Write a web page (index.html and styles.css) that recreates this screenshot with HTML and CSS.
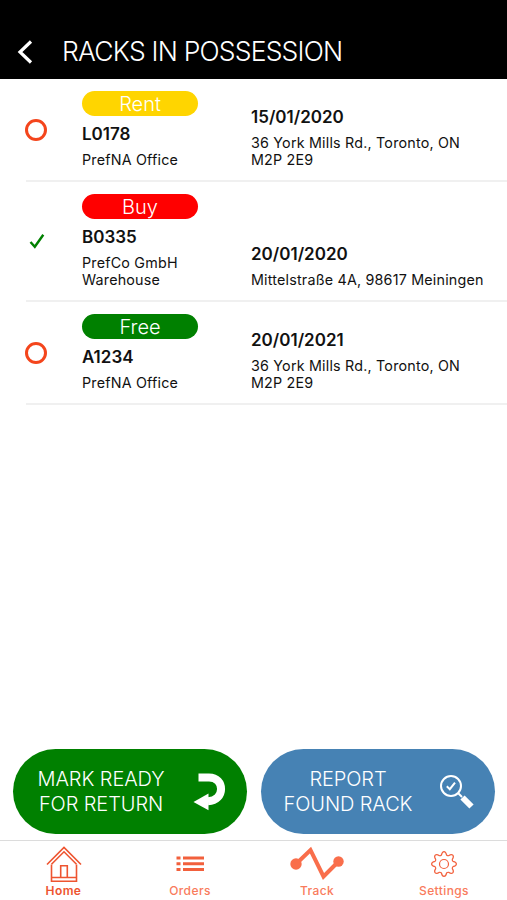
FILE: index.html
```html
<!DOCTYPE html>
<html lang="en">
<head>
    <meta charset="UTF-8">
    <meta name="viewport" content="width=device-width, initial-scale=1.0">
    <title>Racks in Possession</title>
    <link rel="stylesheet" href="styles.css">
</head>
<body>

<header class="header">
    <svg class="back" viewBox="0 0 16 24" width="16" height="24"><path d="M14 1.5L3 12L14 22.5"/></svg>
    <h1>RACKS IN POSSESSION</h1>
</header>

<main class="rack-list">
    <div class="rack">
        <div class="select"><span class="circle"></span></div>
        <div class="info">
            <div class="badge rent">Rent</div>
            <h2>L0178</h2>
            <p>PrefNA Office</p>
        </div>
        <div class="place">
            <h2>15/01/2020</h2>
            <p>36 York Mills Rd., Toronto, ON<br>M2P 2E9</p>
        </div>
    </div>
    <div class="rack">
        <div class="select">
            <svg class="check" viewBox="0 0 16 16" width="16" height="16"><path d="M1.5 9L5.8 13.8L14.3 1.7"/></svg>
        </div>
        <div class="info">
            <div class="badge buy">Buy</div>
            <h2>B0335</h2>
            <p>PrefCo GmbH<br>Warehouse</p>
        </div>
        <div class="place">
            <h2>20/01/2020</h2>
            <p>Mittelstraße 4A, 98617 Meiningen</p>
        </div>
    </div>
    <div class="rack">
        <div class="select"><span class="circle"></span></div>
        <div class="info">
            <div class="badge free">Free</div>
            <h2>A1234</h2>
            <p>PrefNA Office</p>
        </div>
        <div class="place">
            <h2>20/01/2021</h2>
            <p>36 York Mills Rd., Toronto, ON<br>M2P 2E9</p>
        </div>
    </div>
</main>

<div class="actions">
    <button class="action return">
        <span class="label">MARK READY<br>FOR RETURN</span>
        <svg class="return-icon" viewBox="0 0 34 38" width="34" height="38">
            <path class="bend" d="M5.5 4.5H16C32 4.5 32.5 27.5 15 28.2"/>
            <path class="head" d="M0.5 29L15.5 20.5V37.3Z"/>
        </svg>
    </button>
    <button class="action report">
        <span class="label">REPORT<br>FOUND RACK</span>
        <svg class="search-icon" viewBox="0 0 34 34" width="34" height="34">
            <circle cx="11" cy="11" r="10"/>
            <path d="M6.8 11.3L9.8 14.2L15 7.6"/>
            <path d="M18 18L22 22"/>
            <path class="grip" d="M22.5 22.5L31.5 31.5"/>
        </svg>
    </button>
</div>

<nav class="tabs">
    <a class="tab home">
        <svg viewBox="0 0 36 36" width="36" height="36">
            <path d="M1 18.5L18 1.5L35 18.5"/>
            <path d="M5.5 18.5V35.2H30.5V18.5M5.5 31.5H30.5"/>
            <path d="M5.5 18.3L18 5.8L30.5 18.3"/>
            <path d="M14.7 31.5V19.8H21.3V31.5"/>
        </svg>
        <span>Home</span>
    </a>
    <a class="tab orders">
        <svg viewBox="0 0 28 36" width="28" height="36">
            <path d="M0.5 12H4.5M7 12H28M0.5 17.8H4.5M7 17.8H28M0.5 23.6H4.5M7 23.6H28"/>
        </svg>
        <span>Orders</span>
    </a>
    <a class="tab track">
        <svg viewBox="0 0 54 36" width="54" height="36">
            <path d="M6 18L20.5 4L33.5 30.5L48.5 15.5"/>
            <circle cx="6" cy="18" r="5.7"/>
            <circle cx="48.5" cy="15.5" r="5.2"/>
        </svg>
        <span>Track</span>
    </a>
    <a class="tab settings">
        <svg viewBox="0 0 26 36" width="26" height="36">
            <path d="M10.4 9Q11.2 5.6 13 5.6T15.6 9Q16.4 9.9 17.6 9.7Q20.4 7.8 21.8 9.2T21.3 13.4Q21.1 14.6 22 15.4Q25.4 16.2 25.4 18T22 20.6Q21.1 21.4 21.3 22.6Q23.2 25.4 21.8 26.8T17.6 26.3Q16.4 26.1 15.6 27Q14.8 30.4 13 30.4T10.4 27Q9.6 26.1 8.4 26.3Q5.6 28.2 4.2 26.8T4.7 22.6Q4.9 21.4 4 20.6Q0.6 19.8 0.6 18T4 15.4Q4.9 14.6 4.7 13.4Q2.8 10.6 4.2 9.2T8.4 9.7Q9.6 9.9 10.4 9Z"/>
            <circle cx="13" cy="18" r="4.5"/>
        </svg>
        <span>Settings</span>
    </a>
</nav>

</body>
</html>
```

FILE: styles.css
```css
* {
    box-sizing: border-box;
}
body {
    font-family: Inter, "Liberation Sans", sans-serif;
    margin: 0;
    height: 900px;
    background-color: white;
    color: #111;
    display: flex;
    flex-direction: column;
}
h1, h2, p {
    margin: 0;
}
svg {
    fill: none;
    display: block;
}
.header {
    height: 79px;
    padding: 24px 0 0 17px;
    background-color: black;
    color: white;
    display: flex;
    align-items: center;
}
.back {
    stroke: white;
    stroke-width: 3.2;
}
.header h1 {
    margin-left: 29px;
    font-size: 26.5px;
    font-weight: 350;
    line-height: 30px;
    letter-spacing: -0.8px;
    position: relative;
    top: -1px;
}
.rack-list {
    flex: 1;
}
.rack {
    margin-left: 26px;
    padding: 12px 0 12px;
    border-bottom: 2px solid #f0f0f0;
    display: flex;
}
.select {
    width: 56px;
    display: flex;
    align-items: center;
}
.circle {
    width: 22px;
    height: 22px;
    margin-left: -1px;
    border: 3px solid #f4451c;
    border-radius: 50%;
}
.check {
    margin-left: 3px;
    stroke: green;
    stroke-width: 2.4;
}
.info {
    width: 169px;
}
.badge {
    width: 116px;
    height: 25px;
    margin-bottom: 8px;
    border-radius: 13px;
    color: white;
    font-size: 20px;
    font-weight: 350;
    line-height: 26px;
    text-align: center;
}
.rent {
    background-color: #ffd500;
}
.buy {
    background-color: red;
}
.free {
    background-color: green;
}
.rack h2 {
    margin-bottom: 6px;
    font-size: 17px;
    font-weight: 600;
    line-height: 21px;
}
.rack p {
    font-size: 14.3px;
    line-height: 17px;
    letter-spacing: 0.2px;
    white-space: nowrap;
}
.place {
    align-self: flex-end;
}
.actions {
    padding: 0 12px 6px 13px;
    display: flex;
    justify-content: space-between;
}
.action {
    width: 234px;
    height: 85px;
    padding: 0;
    border: none;
    border-radius: 43px;
    color: white;
    font-family: inherit;
    font-size: 20px;
    font-weight: 350;
    line-height: 24.5px;
    letter-spacing: -0.1px;
    display: flex;
    align-items: center;
}
.return {
    padding-left: 23px;
    background-color: green;
}
.report {
    padding-left: 22px;
    background-color: #4682b4;
}
.label {
    width: 130px;
    text-align: center;
    white-space: nowrap;
}
.return-icon {
    margin-left: 27px;
}
.bend {
    stroke: white;
    stroke-width: 8;
}
.head {
    fill: white;
}
.search-icon {
    margin-left: 27px;
    stroke: white;
    stroke-width: 2;
}
.grip {
    stroke-width: 6;
}
.tabs {
    height: 60px;
    padding-top: 5px;
    border-top: 1px solid #dcdcdc;
    display: grid;
    grid-template-columns: 127px 126px 128px 126px;
}
.tab {
    display: flex;
    flex-direction: column;
    align-items: center;
    color: #f97b5c;
    stroke: #f2603c;
    font-size: 12px;
    font-weight: 500;
    line-height: 16px;
    letter-spacing: 0.4px;
}
.tab span {
    margin-top: 1px;
    stroke: none;
}
.home {
    color: #ee5430;
    stroke: #ee5430;
    stroke-width: 1.6;
    font-weight: 600;
}
.orders svg {
    stroke-width: 3;
}
.track svg {
    stroke: #f96e4b;
    stroke-width: 4;
}
.track circle {
    fill: #f96e4b;
    stroke: none;
}
.settings svg {
    stroke-width: 1.2;
    stroke-linejoin: round;
}
```
